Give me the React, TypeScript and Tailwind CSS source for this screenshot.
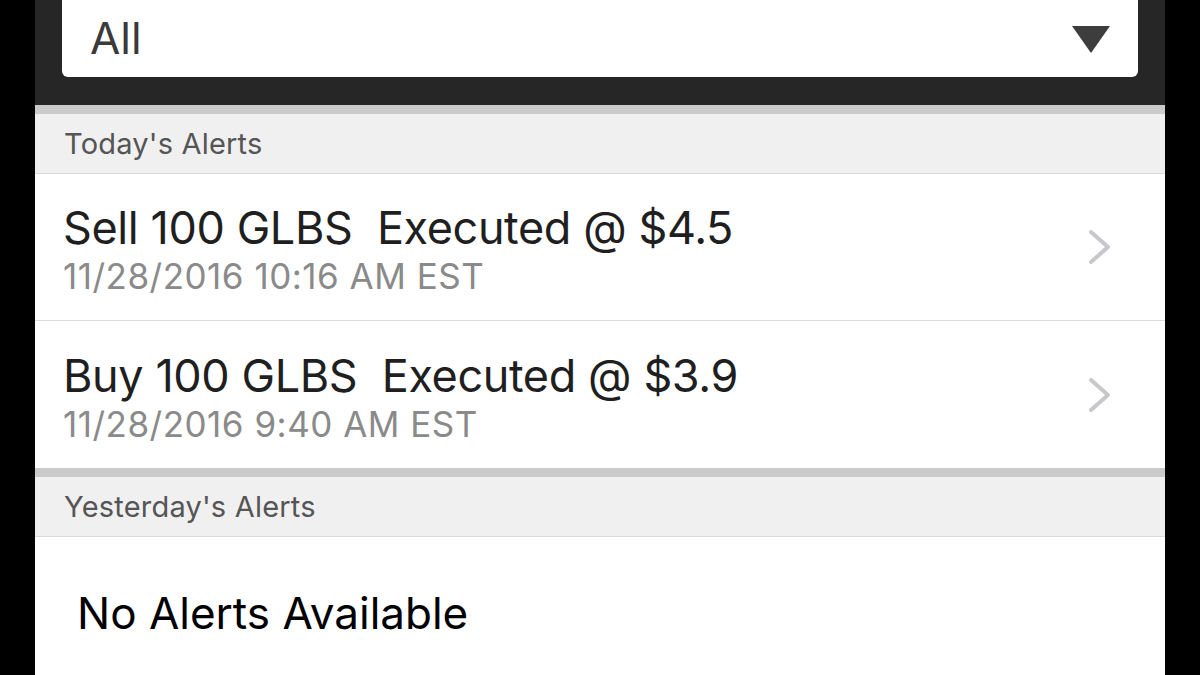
const alerts = [
  { title: "Sell 100 GLBS\u00a0 Executed @ $4.5", time: "11/28/2016 10:16 AM EST" },
  { title: "Buy 100 GLBS\u00a0 Executed @ $3.9", time: "11/28/2016 9:40 AM EST" },
];

function SectionHeader({ label }: { label: string }) {
  return (
    <div className="border-t-[9px] border-[#cbcbcb] bg-[#f0f0f0] border-b border-b-[#dadada]">
      <div className="h-[59px] flex items-center pl-[29px] text-[29px] text-[#555555] tracking-[0.2px]">
        {label}
      </div>
    </div>
  );
}

function Chevron() {
  return (
    <svg width="24" height="36" viewBox="0 0 24 36" fill="none">
      <polyline
        points="3,3 20,18 3,33"
        stroke="#c7c7cc"
        strokeWidth="4"
        strokeLinecap="round"
        strokeLinejoin="round"
      />
    </svg>
  );
}

export default function App() {
  return (
    <div
      className="w-[1200px] h-[675px] overflow-hidden bg-black flex justify-center"
      style={{ fontFamily: "Inter, 'Noto Sans', sans-serif" }}
    >
      <div className="w-[1130px] h-full bg-white flex flex-col">
        {/* Filter bar */}
        <div className="bg-[#262626] h-[105px] shrink-0 px-[27px] pb-[28px] flex items-end">
          <div className="w-full h-[90px] bg-white rounded-b-[6px] flex items-end justify-between pl-[28px] pr-[28px] pb-[14px]">
            <span className="text-[44px] leading-none text-[#3a3a3a] mb-[3px]">All</span>
            <svg width="38" height="27" viewBox="0 0 38 27" className="mb-[10px]">
              <polygon points="0,0 38,0 19,27" fill="#3d3d3d" />
            </svg>
          </div>
        </div>

        <SectionHeader label="Today's Alerts" />

        {alerts.map((a, i) => (
          <div
            key={i}
            className={`h-[147px] flex items-center justify-between pl-[28px] pr-[53px] ${
              i === 0 ? "border-b border-[#dcdcdc]" : ""
            }`}
          >
            <div className="flex flex-col pt-[6px]">
              <span className="text-[45px] leading-[52px] text-[#1f1f1f] tracking-[-0.4px]">{a.title}</span>
              <span className="text-[35px] leading-[44px] text-[#8a8a8a] tracking-[0.5px]">{a.time}</span>
            </div>
            <Chevron />
          </div>
        ))}

        <SectionHeader label="Yesterday's Alerts" />

        <div className="pl-[42px] pt-[43px] text-[44px] text-black">No Alerts Available</div>
      </div>
    </div>
  );
}
